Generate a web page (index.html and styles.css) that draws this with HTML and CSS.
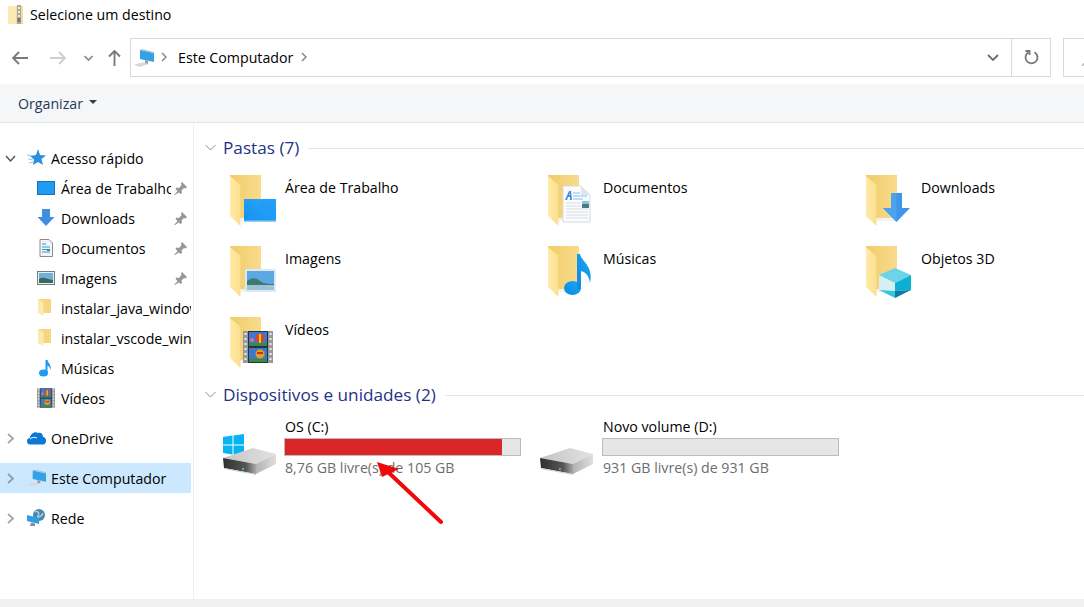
FILE: index.html
```html
<!DOCTYPE html>
<html lang="pt">
<head>
<meta charset="utf-8">
<title>Selecione um destino</title>
<link rel="stylesheet" href="styles.css">
</head>
<body>
<svg class="defs" aria-hidden="true">
  <defs>
    <linearGradient id="gBack" x1="0" y1="0" x2="1" y2="0"><stop offset="0" stop-color="#f0cb6a"/><stop offset="1" stop-color="#f8dc8c"/></linearGradient>
    <linearGradient id="gLeaf" x1="0" y1="0" x2="1" y2="0"><stop offset="0" stop-color="#ffeaa8"/><stop offset="1" stop-color="#fbdf8e"/></linearGradient>
    <linearGradient id="gBlue" x1="0" y1="1" x2="1" y2="0"><stop offset="0" stop-color="#0c8ff0"/><stop offset="1" stop-color="#33aaf8"/></linearGradient>
    <linearGradient id="gNote" x1="0" y1="1" x2="1" y2="0"><stop offset="0" stop-color="#0a8be0"/><stop offset="1" stop-color="#1ea5f5"/></linearGradient>
    <linearGradient id="gTop" x1="0" y1="0" x2="1" y2="0"><stop offset="0" stop-color="#c4c4c4"/><stop offset="1" stop-color="#e2e2e2"/></linearGradient>
    <linearGradient id="gFront" x1="0" y1="0" x2="1" y2="0"><stop offset="0" stop-color="#2f2f2f"/><stop offset=".7" stop-color="#565656"/><stop offset="1" stop-color="#a8a8a8"/></linearGradient>
    <linearGradient id="gSide" x1="0" y1="0" x2="1" y2="0"><stop offset="0" stop-color="#b2b2b2"/><stop offset="1" stop-color="#dedede"/></linearGradient>
    <g id="folder">
      <path d="M1 0H32V43H11L1 40Z" fill="url(#gBack)"/>
      <path d="M11 43H34L32 46H12Z" fill="#f3f3f3"/>
      <path d="M1 1L11.500 10V51L1 41Z" fill="url(#gLeaf)"/>
    </g>
    <g id="mini-folder">
      <path d="M1 0H14V14H6L1 13Z" fill="#f6d67e"/>
      <path d="M1 0L6.500 3V17L1 14Z" fill="#fde9ae"/>
    </g>
    <g id="photo">
      <rect width="31" height="23" fill="#dce9f5"/>
      <rect x="2" y="2" width="27" height="19" fill="#5ca8e4"/>
      <path d="M2 12C8 8 11 9 15 12S24 15 29 15V21H2Z" fill="#3d7a6b"/>
      <rect x="2" y="16" width="27" height="5" fill="#9fc2d8"/>
    </g>
    <g id="film">
      <rect width="30" height="32" fill="#9a9a9a"/>
      <path d="M1.500 2h2v2h-2zM1.500 7h2v2h-2zM1.500 12h2v2h-2zM1.500 17h2v2h-2zM1.500 22h2v2h-2zM1.500 27h2v2h-2zM26.500 2h2v2h-2zM26.500 7h2v2h-2zM26.500 12h2v2h-2zM26.500 17h2v2h-2zM26.500 22h2v2h-2zM26.500 27h2v2h-2z" fill="#eee"/>
      <rect x="5" y="0" width="20" height="32" fill="#26324a"/>
      <rect x="6" y="1" width="18" height="14" fill="#3f78c8"/>
      <rect x="6" y="17" width="18" height="14" fill="#3f78c8"/>
      <rect x="6" y="12" width="18" height="3" fill="#3d8a3a"/>
      <rect x="6" y="28" width="18" height="3" fill="#3d8a3a"/>
      <circle cx="17" cy="7" r="4.500" fill="#d8482a"/>
      <rect x="16" y="3" width="2" height="9" fill="#f2c230"/>
      <circle cx="17" cy="23" r="4.500" fill="#e0a020"/>
      <rect x="14" y="21" width="6" height="2" fill="#c83020"/>
      <circle cx="9" cy="9" r="2" fill="#e86aa0"/>
    </g>
    <g id="hdd">
      <path d="M0 10L30 0 53 6 33 16Z" fill="url(#gTop)"/>
      <path d="M0 10L33 16V26L1 20Z" fill="url(#gFront)"/>
      <path d="M33 16L53 6V16L33 26Z" fill="url(#gSide)"/>
      <path d="M1 20L33 26V27L1 21Z" fill="#cfcfcf"/>
      <rect x="19" y="20" width="2" height="2" fill="#3fd04a"/>
    </g>
    <g id="pc">
      <path d="M6 1L20 4V13L6 10Z" fill="#35a2e6"/>
      <path d="M6 1L20 4 20 3 8 0Z" fill="#a9c4d6"/>
      <path d="M11 11L14 12V15L11 15Z" fill="#9a9a9a"/>
      <path d="M0 15.500L9 13.500 15 15 5 18Z" fill="#d8d8d8"/>
    </g>
    <g id="pin">
      <path d="M8 0L13 5 11.500 6.500 10 6 7.500 8.500 8 11 6.500 12 1.500 7 2.500 5.500 5 6 7.500 3 7 1.500Z" fill="#979797"/>
      <path d="M4 8.500L0 13 1 13 5.500 10Z" fill="#979797"/>
    </g>
  </defs>
</svg>

<header class="titlebar">
  <svg class="title-icon" width="16" height="20" viewBox="0 0 16 20">
    <rect x="0" y="1" width="15" height="18" fill="#f9dd8e"/>
    <rect x="0" y="1" width="8" height="18" fill="#fde9b2"/>
    <rect x="9" y="0" width="4" height="19" fill="#a9a9a9"/>
    <path d="M10 2h2v2h-2zM10 6h2v2h-2zM10 10h2v2h-2z" fill="#ececec"/>
    <rect x="9.500" y="13" width="3" height="4" fill="#777"/>
  </svg>
  <span>Selecione um destino</span>
</header>

<nav class="navbar">
  <div class="nav-buttons">
    <svg class="nav-back" width="16" height="14" viewBox="0 0 16 14"><path d="M1 7H16M7 1L1 7 7 13" fill="none" stroke="#7a7a7a" stroke-width="1.900"/></svg>
    <svg class="nav-forward" width="16" height="14" viewBox="0 0 16 14"><path d="M0 7H15M9 1L15 7 9 13" fill="none" stroke="#cfcfcf" stroke-width="1.900"/></svg>
    <svg class="nav-down" width="9" height="6" viewBox="0 0 9 6"><path d="M0.500 1L4.500 5 8.500 1" fill="none" stroke="#8a8a8a" stroke-width="1.700"/></svg>
    <svg class="nav-up" width="13" height="16" viewBox="0 0 13 16"><path d="M6.500 16V1M1 6.500L6.500 1 12 6.500" fill="none" stroke="#7a7a7a" stroke-width="1.900"/></svg>
  </div>
  <div class="address">
    <svg class="address-pc" width="20" height="18" viewBox="0 0 20 18"><use href="#pc"/></svg>
    <svg class="crumb-sep" width="6" height="10" viewBox="0 0 6 10"><path d="M1 1L5 5 1 9" fill="none" stroke="#7d7d7d" stroke-width="1.300"/></svg>
    <span class="crumb">Este Computador</span>
    <svg class="crumb-sep" width="6" height="10" viewBox="0 0 6 10"><path d="M1 1L5 5 1 9" fill="none" stroke="#7d7d7d" stroke-width="1.300"/></svg>
    <svg class="address-drop" width="12" height="7" viewBox="0 0 12 7"><path d="M1 1L6 6 11 1" fill="none" stroke="#6d6d6d" stroke-width="1.800"/></svg>
    <div class="refresh">
      <svg width="15" height="15" viewBox="0 0 15 15"><path d="M4.500 2.200A6 6 0 1 0 10.500 2.200" fill="none" stroke="#757575" stroke-width="1.800"/><path d="M1.500 1H5.500V5" fill="none" stroke="#757575" stroke-width="1.800"/></svg>
    </div>
  </div>
  <div class="search">
    <svg width="4" height="6" viewBox="0 0 4 6"><path d="M0 6L4 1" stroke="#a08a70" stroke-width="1"/></svg>
  </div>
</nav>

<div class="toolbar">
  <span class="organize">Organizar</span>
  <span class="caret"></span>
</div>

<div class="body">
  <aside class="sidebar">
    <div class="tree-row tree-top">
      <svg class="tw" width="11" height="11" viewBox="0 0 11 11"><path d="M1 3L5.500 8 10 3" fill="none" stroke="#555" stroke-width="1.500"/></svg>
      <svg class="ticon" width="19" height="18" viewBox="0 0 19 18"><path d="M11 0L13 6 19 6.500 14.500 10 16 16 11 13 6 16 7 10.500 3 7 9 6Z" fill="#2c8fe0"/><path d="M0 6L5 7M1 10L6 11M2 14L6 13" stroke="#8fc8f0" stroke-width="1"/></svg>
      <span class="tlabel">Acesso rápido</span>
    </div>
    <div class="tree-row tree-sub">
      <svg class="ticon" width="18" height="14" viewBox="0 0 18 14"><rect x="0.500" y="0.500" width="17" height="13" fill="#1c9cf2" stroke="#1a6fb0"/></svg>
      <span class="tlabel tlabel-pin">Área de Trabalho</span>
      <svg class="pin" width="13" height="13" viewBox="0 0 13 13"><use href="#pin"/></svg>
    </div>
    <div class="tree-row tree-sub">
      <svg class="ticon" width="18" height="18" viewBox="0 0 18 18"><path d="M5 0H13V8H17.500L9 17 0.500 8H5Z" fill="#3d8fdf"/></svg>
      <span class="tlabel tlabel-pin">Downloads</span>
      <svg class="pin" width="13" height="13" viewBox="0 0 13 13"><use href="#pin"/></svg>
    </div>
    <div class="tree-row tree-sub">
      <svg class="ticon" width="18" height="18" viewBox="0 0 18 18"><path d="M3 0.500H12L15.500 4V17.500H3Z" fill="#f2f4f6" stroke="#8c8c8c"/><path d="M5 5H9M5 8H13M5 10.500H13M5 13H13" stroke="#2f9ae0"/><rect x="10" y="10" width="3" height="2" fill="#4a7f90"/></svg>
      <span class="tlabel tlabel-pin">Documentos</span>
      <svg class="pin" width="13" height="13" viewBox="0 0 13 13"><use href="#pin"/></svg>
    </div>
    <div class="tree-row tree-sub">
      <svg class="ticon" width="18" height="14" viewBox="0 0 18 14"><rect x="0.500" y="0.500" width="17" height="13" fill="#e9eef2" stroke="#7a7a7a"/><rect x="2" y="2" width="14" height="10" fill="#6fb0de"/><path d="M2 8C6 5 10 8 16 9V12H2Z" fill="#38695f"/></svg>
      <span class="tlabel tlabel-pin">Imagens</span>
      <svg class="pin" width="13" height="13" viewBox="0 0 13 13"><use href="#pin"/></svg>
    </div>
    <div class="tree-row tree-sub">
      <svg class="ticon" width="18" height="18" viewBox="0 0 18 18"><use href="#mini-folder"/></svg>
      <span class="tlabel tlabel-clip">instalar_java_windows</span>
    </div>
    <div class="tree-row tree-sub">
      <svg class="ticon" width="18" height="18" viewBox="0 0 18 18"><use href="#mini-folder"/></svg>
      <span class="tlabel tlabel-clip">instalar_vscode_windows</span>
    </div>
    <div class="tree-row tree-sub">
      <svg class="ticon" width="18" height="18" viewBox="0 0 18 18"><ellipse cx="6.500" cy="14" rx="4.500" ry="3.500" fill="#1c9cf0"/><path d="M8.500 1H10.500C11 4 15 6 13.500 11 13 8 11.500 7 10.500 6.500V14H8.500Z" fill="#1c9cf0"/></svg>
      <span class="tlabel">Músicas</span>
    </div>
    <div class="tree-row tree-sub">
      <svg class="ticon" width="18" height="20" viewBox="0 0 30 32"><use href="#film"/></svg>
      <span class="tlabel">Vídeos</span>
    </div>
    <div class="tree-row tree-top tree-group">
      <svg class="tw" width="11" height="11" viewBox="0 0 11 11"><path d="M3 1L8 5.500 3 10" fill="none" stroke="#a6a6a6" stroke-width="1.800"/></svg>
      <svg class="ticon" width="19" height="14" viewBox="0 0 19 14"><path d="M3 13.500C-1 13.500-1 7 3 7 3 3 8 0 11 2 14 1 16 3 16 6 20 6 20 13.500 16 13.500Z" fill="#0a78d4"/><path d="M3 8C5 6 9 6 10 7" fill="none" stroke="#fff"/></svg>
      <span class="tlabel">OneDrive</span>
    </div>
    <div class="tree-row tree-top tree-group tree-selected">
      <svg class="tw" width="11" height="11" viewBox="0 0 11 11"><path d="M3 1L8 5.500 3 10" fill="none" stroke="#8f9aa3" stroke-width="1.800"/></svg>
      <svg class="ticon" width="19" height="18" viewBox="0 0 20 18"><use href="#pc"/></svg>
      <span class="tlabel">Este Computador</span>
    </div>
    <div class="tree-row tree-top tree-group">
      <svg class="tw" width="11" height="11" viewBox="0 0 11 11"><path d="M3 1L8 5.500 3 10" fill="none" stroke="#a6a6a6" stroke-width="1.800"/></svg>
      <svg class="ticon" width="19" height="18" viewBox="0 0 19 18"><circle cx="12" cy="6" r="6" fill="#4d88a8"/><path d="M8 3C11 1 13 5 11 7S15 8 16 4" fill="none" stroke="#a8d0e0" stroke-width="1.500"/><path d="M0 6L12 9V15L0 12Z" fill="#2f9fe4"/><path d="M4 13.500L8 14.500V17L3 17Z" fill="#8c8c8c"/></svg>
      <span class="tlabel">Rede</span>
    </div>
  </aside>

  <main class="content">
    <section class="group">
      <div class="group-head">
        <svg class="group-chev" width="11" height="7" viewBox="0 0 11 7"><path d="M0.500 1L5.500 6 10.500 1" fill="none" stroke="#8b8b8b"/></svg>
        <h2 class="group-title">Pastas (7)</h2>
        <div class="group-line"></div>
      </div>
      <div class="folders">
        <div class="folder">
          <svg class="folder-icon" width="56" height="56" viewBox="0 0 56 56"><use href="#folder"/><rect x="15" y="24" width="32" height="23" fill="url(#gBlue)"/><path d="M15 47L34 24H47V47Z" fill="#1d9bf6" opacity=".6"/><rect x="15" y="45.500" width="32" height="1.500" fill="#9ccdf0"/></svg>
          <span class="folder-name">Área de Trabalho</span>
        </div>
        <div class="folder">
          <svg class="folder-icon" width="56" height="56" viewBox="0 0 56 56"><use href="#folder"/><path d="M16 11H34L43 20V47H16Z" fill="#fbfcfd" stroke="#d8d8d8"/><path d="M34 11V20H43Z" fill="#dfe5ea"/><path d="M22 16L18 25H20L21 22H23V25H25L24 16ZM22 20L23 18V20Z" fill="#3b8fd8"/><path d="M26 18H33M26 21H40M26 24H36" stroke="#7fc0ec"/><path d="M19 28H34M19 31H34M19 34H41M19 37H41M19 40H41M19 43H41" stroke="#d5dde3"/><rect x="35" y="26" width="7" height="7" fill="#457a86"/><rect x="35" y="26" width="7" height="3" fill="#8ec0e0"/></svg>
          <span class="folder-name">Documentos</span>
        </div>
        <div class="folder">
          <svg class="folder-icon" width="56" height="56" viewBox="0 0 56 56"><use href="#folder"/><path d="M26 18H37V33H45L31.500 47 18 33H26Z" fill="#3d96e8"/><path d="M18 33H26V18H31.500V47Z" fill="#4aa3ef"/></svg>
          <span class="folder-name">Downloads</span>
        </div>
        <div class="folder">
          <svg class="folder-icon" width="56" height="56" viewBox="0 0 56 56"><use href="#folder"/><use href="#photo" x="16" y="23"/></svg>
          <span class="folder-name">Imagens</span>
        </div>
        <div class="folder">
          <svg class="folder-icon" width="56" height="56" viewBox="0 0 56 56"><use href="#folder"/><ellipse cx="25.500" cy="42" rx="8.500" ry="7" fill="url(#gNote)"/><path d="M30 8H33C34 15 47 20 43 37 42 28 37 26 34 25V43H30Z" fill="url(#gNote)"/></svg>
          <span class="folder-name">Músicas</span>
        </div>
        <div class="folder">
          <svg class="folder-icon" width="56" height="56" viewBox="0 0 56 56"><use href="#folder"/><path d="M30 22L46 29 30 37 14 29Z" fill="#6bd3ea"/><path d="M14 29L30 37V45L14 44Z" fill="#d3f0f5"/><path d="M46 29L30 37V45L46 44Z" fill="#0bb0d2"/><path d="M14 44L30 52V45Z" fill="#35c6d8"/><path d="M46 44L30 52V45Z" fill="#0a7ea0"/></svg>
          <span class="folder-name">Objetos 3D</span>
        </div>
        <div class="folder">
          <svg class="folder-icon" width="56" height="56" viewBox="0 0 56 56"><use href="#folder"/><use href="#film" x="14" y="14"/></svg>
          <span class="folder-name">Vídeos</span>
        </div>
      </div>
    </section>

    <section class="group">
      <div class="group-head">
        <svg class="group-chev" width="11" height="7" viewBox="0 0 11 7"><path d="M0.500 1L5.500 6 10.500 1" fill="none" stroke="#8b8b8b"/></svg>
        <h2 class="group-title">Dispositivos e unidades (2)</h2>
        <div class="group-line"></div>
      </div>
      <div class="drives">
        <div class="drive">
          <svg class="drive-icon" width="54" height="44" viewBox="0 0 54 44">
            <path d="M1 6L10.500 4.500V13.500H1ZM11.500 4.500L22 3V13.500H11.500ZM1 14.500H10.500V23.500L1 22ZM11.500 14.500H22V25L11.500 23.500Z" fill="#06b4f4"/>
            <use href="#hdd" x="1" y="17"/>
          </svg>
          <div class="drive-info">
            <div class="drive-name">OS (C:)</div>
            <div class="bar"><div class="bar-fill" style="width:92.4%"></div></div>
            <div class="drive-free">8,76 GB livre(s) de 105 GB</div>
          </div>
        </div>
        <div class="drive">
          <svg class="drive-icon" width="54" height="44" viewBox="0 0 54 44"><use href="#hdd" x="0" y="17"/></svg>
          <div class="drive-info">
            <div class="drive-name">Novo volume (D:)</div>
            <div class="bar"></div>
            <div class="drive-free">931 GB livre(s) de 931 GB</div>
          </div>
        </div>
      </div>
    </section>
  </main>
</div>
<div class="statusbar"></div>

<svg class="red-arrow" width="70" height="66" viewBox="0 0 70 66" aria-hidden="true">
  <path d="M65 61L12 11" stroke="#ee0a0a" stroke-width="4" stroke-linecap="round"/>
  <path d="M1 1L23 8 6 16Z" fill="#ee0a0a"/>
</svg>
</body>
</html>
```
FILE: styles.css
```css
* { box-sizing: border-box; }
html, body { margin: 0; padding: 0; }
body {
  width: 1084px;
  height: 607px;
  overflow: hidden;
  position: relative;
  display: flex;
  flex-direction: column;
  background: #fff;
  color: #000;
  font-family: "Open Sans", "Noto Sans", "Liberation Sans", sans-serif;
  font-size: 14.2px;
}
.defs { position: absolute; width: 0; height: 0; }

.titlebar {
  height: 29px;
  display: flex;
  align-items: center;
  padding-left: 8px;
  gap: 6px;
  flex: none;
}
.title-icon { flex: none; }

.navbar {
  height: 55px;
  flex: none;
  display: flex;
  align-items: flex-start;
  padding-top: 9px;
}
.nav-buttons {
  width: 130px;
  height: 39px;
  flex: none;
  display: flex;
  align-items: center;
  padding-left: 12px;
}
.nav-forward { margin-left: 22px; }
.nav-down { margin-left: 18px; }
.nav-up { margin-left: 15px; }
.address {
  width: 921px;
  height: 39px;
  flex: none;
  display: flex;
  align-items: center;
  border: 1px solid #d9d9d9;
  padding-left: 3px;
}
.crumb-sep { flex: none; margin-left: 8px; margin-top: -2px; }
.address-pc + .crumb-sep { margin-left: 7px; }
.crumb { margin-left: 11px; }
.address-drop { margin-left: auto; margin-right: 12px; }
.refresh {
  width: 39px;
  height: 37px;
  border-left: 1px solid #d9d9d9;
  display: flex;
  align-items: center;
  justify-content: center;
}
.search {
  margin-left: 12px;
  width: 30px;
  height: 39px;
  border: 1px solid #d9d9d9;
  padding: 21px 0 0 18px;
  flex: none;
}
.search svg { display: block; }

.toolbar {
  height: 39px;
  flex: none;
  display: flex;
  align-items: center;
  padding-left: 18px;
  gap: 6px;
  background: #f5f6f7;
  border-bottom: 1px solid #e6e6e6;
}
.organize { color: #1e395b; }
.caret {
  width: 0;
  height: 0;
  border-left: 4px solid transparent;
  border-right: 4px solid transparent;
  border-top: 4px solid #2d3e55;
  margin-top: -2px;
}

.body {
  flex: 1;
  display: flex;
  min-height: 0;
}
.sidebar {
  width: 194px;
  flex: none;
  border-right: 1px solid #f0f0f0;
  padding-top: 20px;
}
.tree-row {
  height: 30px;
  width: 191px;
  display: flex;
  align-items: center;
  overflow: hidden;
  white-space: nowrap;
}
.tree-top { padding-left: 5px; }
.tree-sub { padding-left: 37px; }
.tree-group { margin-top: 10px; }
.tree-selected { background: #cce8ff; }
.tw { flex: none; width: 11px; margin-right: 11px; }
.ticon { flex: none; margin-right: 6px; }
.tree-top .ticon { margin-right: 5px; }
.tlabel { flex: none; }
.tlabel-pin { width: 110px; overflow: hidden; }
.tlabel-clip { width: 130px; overflow: hidden; }
.pin { flex: none; margin-left: 3px; }

.content {
  flex: 1;
  min-width: 0;
  padding-top: 15px;
  overflow: hidden;
}
.group-head {
  height: 20px;
  display: flex;
  align-items: center;
  padding-left: 11px;
}
.group-chev { flex: none; margin-right: 7px; margin-top: -2px; }
.group-title {
  margin: 0;
  padding-bottom: 2px;
  font-weight: 400;
  font-size: 17.2px;
  color: #1e3287;
  white-space: nowrap;
}
.group-line {
  flex: 1;
  height: 1px;
  margin-left: 9px;
  background: #e5e5e5;
}
.folders {
  display: grid;
  grid-template-columns: repeat(3, 318px);
  grid-auto-rows: 56px;
  row-gap: 15px;
  padding-left: 35px;
  margin-top: 17px;
  margin-bottom: 12px;
}
.folder {
  display: flex;
  align-items: flex-start;
}
.folder-icon { flex: none; }
.folder-name { line-height: 26px; }

.drives {
  display: grid;
  grid-template-columns: repeat(2, 318px);
  padding-left: 28px;
  margin-top: 13px;
}
.drive { display: flex; }
.drive-icon { flex: none; margin-top: 13px; margin-right: 8px; }
.drive-info { width: 237px; flex: none; }
.drive-name { height: 20px; line-height: 18px; padding-left: 1px; }
.bar {
  height: 18px;
  background: #e6e6e6;
  border: 1px solid #bcbcbc;
}
.bar-fill { height: 100%; background: #da2626; }
.drive-free { color: #6d6d6d; height: 20px; line-height: 24px; padding-left: 1px; }

.statusbar {
  height: 8px;
  flex: none;
  background: #f0f0f0;
}
.red-arrow {
  position: absolute;
  left: 376px;
  top: 461px;
}
```
